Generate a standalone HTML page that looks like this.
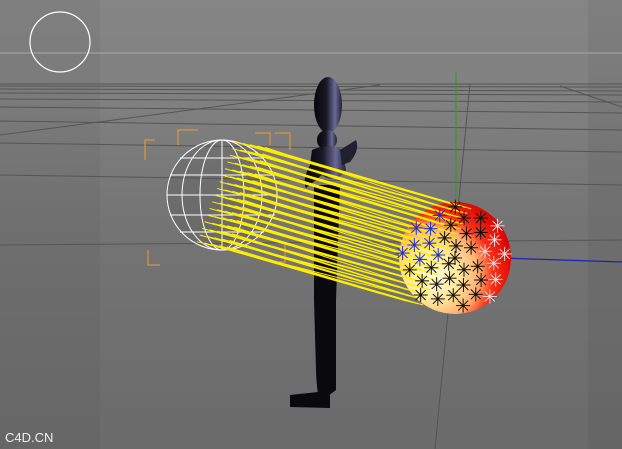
<!DOCTYPE html>
<html><head><meta charset="utf-8"><style>
html,body{margin:0;padding:0;width:622px;height:449px;overflow:hidden;background:#777}
svg{display:block}
</style></head><body>
<svg id="s" width="622" height="449" viewBox="0 0 622 449" xmlns="http://www.w3.org/2000/svg">
<defs>
<linearGradient id="bg" x1="0" y1="0" x2="0" y2="1">
<stop offset="0" stop-color="#858585"/><stop offset="0.2" stop-color="#818181"/><stop offset="0.5" stop-color="#747474"/><stop offset="1" stop-color="#6b6b6b"/>
</linearGradient>
<radialGradient id="ball" cx="0.3" cy="0.65" r="0.75">
<stop offset="0" stop-color="#fffbe0"/><stop offset="0.3" stop-color="#ffeaa0"/><stop offset="0.55" stop-color="#ffb070"/><stop offset="0.72" stop-color="#f83018"/><stop offset="1" stop-color="#d80000"/>
</radialGradient>
<linearGradient id="body" x1="0" y1="0" x2="1" y2="0">
<stop offset="0" stop-color="#050508"/><stop offset="0.45" stop-color="#1a1a28"/><stop offset="0.75" stop-color="#6a6a98"/><stop offset="1" stop-color="#202030"/>
</linearGradient>
</defs>
<rect width="622" height="449" fill="url(#bg)"/>
<rect x="0" width="100" height="449" fill="#000" opacity="0.04"/>
<rect x="588" width="34" height="449" fill="#000" opacity="0.05"/>
<line x1="0" y1="53" x2="622" y2="53" stroke="#a8a8a8" stroke-width="1"/>
<g stroke="#555" stroke-width="1" fill="none">
<line x1="0" y1="84" x2="622" y2="84"/><line x1="0" y1="86" x2="622" y2="87"/>
<line x1="0" y1="89" x2="622" y2="91"/><line x1="0" y1="93" x2="622" y2="95"/>
<line x1="0" y1="99" x2="622" y2="102"/><line x1="0" y1="107" x2="622" y2="113"/>
<line x1="0" y1="121" x2="622" y2="130"/><line x1="0" y1="143" x2="622" y2="152"/>
<line x1="0" y1="135" x2="380" y2="85"/><line x1="560" y1="86" x2="622" y2="107"/>
<line x1="0" y1="245" x2="622" y2="240"/><line x1="470" y1="84" x2="435" y2="449"/>
<line x1="0" y1="175" x2="622" y2="185"/>
</g>
<circle cx="60" cy="42" r="30" fill="none" stroke="#fff" stroke-width="1.2"/>
<line x1="456" y1="72" x2="456" y2="230" stroke="#2a9a2a" stroke-width="1"/>
<line x1="500" y1="258" x2="622" y2="262" stroke="#2020b0" stroke-width="1.2"/>
<g fill="#0a0a0e">
<ellipse cx="328" cy="105" rx="14" ry="28" fill="url(#body)"/>
<ellipse cx="327" cy="140" rx="10" ry="10" fill="url(#body)"/>
<path d="M312 150 Q330 142 342 150 L346 170 Q335 185 322 175 L306 188 Q302 180 310 165Z" fill="url(#body)"/>
<path d="M340 150 L356 140 Q360 150 350 162 L342 165Z" fill="#202030"/>
<path d="M314 185 L340 185 L336 300 L336 390 L320 402 L300 404 L296 398 L318 394 Q316 380 316 370 L314 300Z"/>
<path d="M290 395 L318 392 L330 395 L330 408 L290 407Z"/>
</g>
<g stroke="#fff" fill="none" stroke-width="1">
<ellipse cx="222" cy="195" rx="55" ry="55" fill="#555" fill-opacity="0.3"/>
<ellipse cx="222" cy="195" rx="40" ry="55"/><ellipse cx="222" cy="195" rx="22" ry="55"/>
<line x1="222" y1="140" x2="222" y2="250"/>
<line x1="170" y1="175" x2="275" y2="175"/><line x1="167" y1="195" x2="277" y2="195"/><line x1="170" y1="215" x2="275" y2="215"/>
<line x1="180" y1="158" x2="264" y2="158"/><line x1="180" y1="232" x2="264" y2="232"/>
</g>
<g stroke="#e8a030" fill="none" stroke-width="1">
<path d="M145 160 V140 h10"/><path d="M178 145 V130 h20"/><path d="M270 145 V133 h-15"/><path d="M290 150 V133 h-15"/>
<path d="M148 250 V265 h12"/><path d="M285 245 V262 h-15"/>
</g>
<circle cx="455" cy="258" r="56" fill="url(#ball)"/>
<g id="yl" stroke="#ffee00" stroke-width="1"></g>
<g id="st" stroke-width="1"></g>
<text x="5" y="442" font-family="Liberation Sans, sans-serif" font-size="13" fill="#eee">C4D.CN</text>
</svg>
<script>
var ns="http://www.w3.org/2000/svg",yl=document.getElementById('yl');
for(var i=0;i<80;i++){var t=i/79;
var x1=235-t*40+((i%5)*8),y1=142+t*105,x2=455-t*50+((i%4)*6),y2=205+t*100;
var l=document.createElementNS(ns,'line');l.setAttribute('x1',x1);l.setAttribute('y1',y1);l.setAttribute('x2',x2);l.setAttribute('y2',y2);yl.appendChild(l);}
var st=document.getElementById('st');
for(var a=0;a<40;a++){var ang=a*2.4,r=Math.sqrt(a/40)*54;var cx=455+Math.cos(ang)*r,cy=258+Math.sin(ang)*r;
var col=cx<440&&cy<265?'#2030c0':(cx>485?'#ddd':'#111');
for(var k=0;k<4;k++){var aa=k*Math.PI/4,l=document.createElementNS(ns,'line');
l.setAttribute('x1',cx-7*Math.cos(aa));l.setAttribute('y1',cy-7*Math.sin(aa));l.setAttribute('x2',cx+7*Math.cos(aa));l.setAttribute('y2',cy+7*Math.sin(aa));l.setAttribute('stroke',col);st.appendChild(l);}}
</script>
</body></html>
